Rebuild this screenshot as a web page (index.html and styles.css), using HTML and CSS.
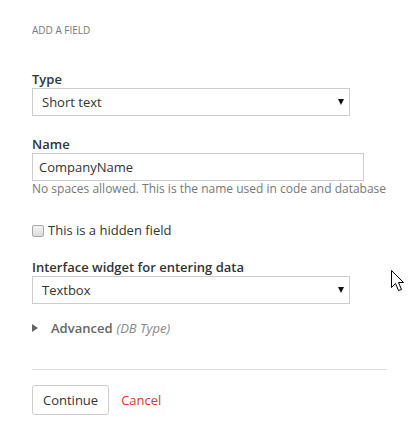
FILE: index.html
```html
<!DOCTYPE html>
<html>
<head>
<meta charset="utf-8">
<link rel="stylesheet" href="styles.css">
</head>
<body>
<div class="page">
  <div class="heading">ADD A FIELD</div>

  <div class="field field-type">
    <div class="label">Type</div>
    <div class="select"><span>Short text</span><i class="caret"></i></div>
  </div>

  <div class="field field-name">
    <div class="label">Name</div>
    <div class="input">CompanyName</div>
    <div class="help">No spaces allowed. This is the name used in code and database</div>
  </div>

  <div class="check-row">
    <span class="checkbox"></span>
    <span class="check-label">This is a hidden field</span>
  </div>

  <div class="field field-widget">
    <div class="label">Interface widget for entering data</div>
    <div class="select"><span>Textbox</span><i class="caret"></i></div>
  </div>

  <div class="advanced">
    <i class="tri"></i>
    <span class="adv-title">Advanced</span>
    <em class="adv-note">(DB Type)</em>
  </div>

  <div class="divider"></div>

  <div class="actions">
    <button class="btn">Continue</button>
    <a class="cancel">Cancel</a>
  </div>

  <svg class="cursor" width="14" height="24" viewBox="0 0 14 24">
    <path d="M0.5 0.5 L0.5 17.5 L4.5 13.5 L7.5 20.5 L10.5 19.5 L7.5 12.5 L12.5 12.5 Z" fill="#fff" stroke="#000" stroke-width="1" stroke-linejoin="miter"/>
  </svg>
</div>
</body>
</html>
```

FILE: styles.css
```css
html, body {
  margin: 0;
  padding: 0;
  background: #fff;
}

.page {
  position: relative;
  width: 418px;
  height: 425px;
  box-sizing: border-box;
  padding: 23px 0 0 32px;
  font-family: "Open Sans", "Liberation Sans", sans-serif;
  color: #333;
  font-size: 13px;
  line-height: 18px;
}

.heading {
  font-size: 10px;
  line-height: 14px;
  color: #777;
  margin-bottom: 33px;
}

.label {
  font-weight: 600;
  color: #333;
}

.select {
  width: 318px;
  height: 28px;
  box-sizing: border-box;
  border: 1px solid #ccc;
  display: flex;
  align-items: center;
  justify-content: space-between;
  padding: 0 5px 0 9px;
}

.caret {
  display: block;
  width: 0;
  height: 0;
  border-left: 3px solid transparent;
  border-right: 3px solid transparent;
  border-top: 6px solid #111;
}

.field-type {
  margin-bottom: 19px;
}

.input {
  width: 332px;
  height: 28px;
  box-sizing: border-box;
  border: 1px solid #ccc;
  padding: 4px 6px;
}

.help {
  font-size: 12px;
  line-height: 16px;
  color: #777;
}

.field-name {
  margin-bottom: 24px;
}

.check-row {
  display: flex;
  align-items: center;
  gap: 4px;
  height: 18px;
  margin-bottom: 19px;
}

.checkbox {
  width: 12px;
  height: 12px;
  box-sizing: border-box;
  border: 1px solid #a8a8a8;
  border-radius: 2px;
  background: linear-gradient(#f4f4f4, #dcdcdc);
  margin-top: 2px;
}

.field-widget {
  margin-bottom: 15px;
}

.advanced {
  display: flex;
  align-items: center;
  height: 18px;
  color: #666;
}

.tri {
  display: block;
  width: 0;
  height: 0;
  border-top: 4.5px solid transparent;
  border-bottom: 4.5px solid transparent;
  border-left: 6px solid #666;
  margin-right: 13px;
}

.adv-title {
  font-weight: 600;
  margin-right: 4px;
}

.adv-note {
  color: #888;
  font-style: italic;
}

.divider {
  width: 355px;
  height: 0;
  border-top: 1px solid #ddd;
  margin: 32px 0 15px;
}

.actions {
  display: flex;
  align-items: center;
  gap: 12px;
}

.btn {
  font-family: inherit;
  font-size: 13px;
  color: #333;
  background: #fff;
  border: 1px solid #ccc;
  border-radius: 3px;
  height: 30px;
  padding: 0 10px;
  margin: 0;
}

.cancel {
  color: #d23a30;
  font-size: 13px;
}

.cursor {
  position: absolute;
  left: 391px;
  top: 270px;
}
```
